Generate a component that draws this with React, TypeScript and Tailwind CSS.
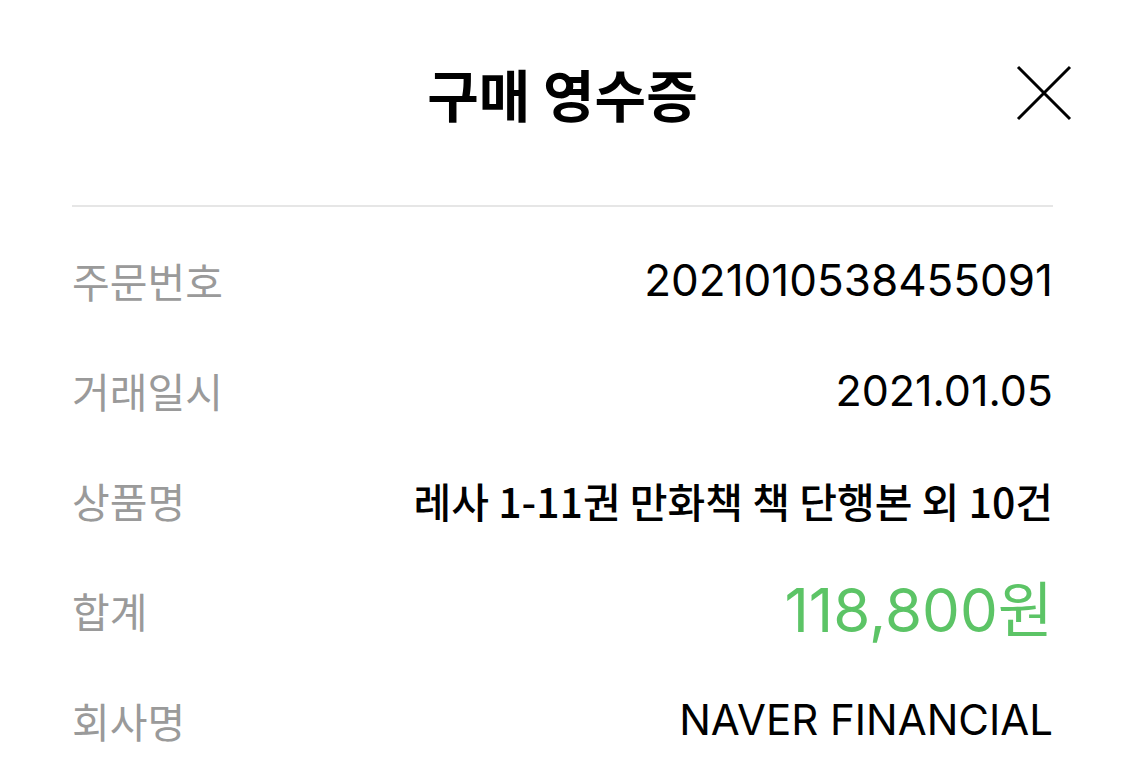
import React from "react";

function Row({ label, children }: { label: string; children: React.ReactNode }) {
  return (
    <div className="flex h-[110px] items-center justify-between">
      <span className="font-['Noto_Sans_CJK_KR',sans-serif] text-[41px] leading-none text-[#9a9a9a]">
        {label}
      </span>
      {children}
    </div>
  );
}

export default function App() {
  return (
    <div className="relative min-h-[784px] w-full bg-white px-[72px]">
      <div className="flex h-[186px] items-center justify-center">
        <h1 className="font-['Noto_Sans_CJK_KR',sans-serif] text-[56px] font-bold leading-none text-black">
          구매 영수증
        </h1>
      </div>
      <button className="absolute right-[53px] top-[65px] h-[56px] w-[56px]" aria-label="close">
        <svg viewBox="0 0 56 56" width="56" height="56">
          <path d="M2 2 L54 54 M54 2 L2 54" stroke="#000" strokeWidth="3" fill="none" />
        </svg>
      </button>
      <div className="mt-[19px] h-[2px] bg-[#e6e6e6]" />
      <div className="pt-[18px]">
        <Row label="주문번호">
          <span className="font-['Inter','Noto_Sans_CJK_KR',sans-serif] text-[44px] leading-none text-black">
            2021010538455091
          </span>
        </Row>
        <Row label="거래일시">
          <span className="font-['Inter','Noto_Sans_CJK_KR',sans-serif] text-[43px] leading-none text-black">
            2021.01.05
          </span>
        </Row>
        <Row label="상품명">
          <span className="font-['Noto_Sans_CJK_KR',sans-serif] text-[41px] font-medium leading-none text-black">
            레사 1-11권 만화책 책 단행본 외 10건
          </span>
        </Row>
        <Row label="합계">
          <span className="font-['Inter','Noto_Sans_CJK_KR',sans-serif] text-[60px] leading-none text-[#5cc466]">
            118,800원
          </span>
        </Row>
        <Row label="회사명">
          <span className="font-['Inter','Noto_Sans_CJK_KR',sans-serif] text-[42px] leading-none text-black">
            NAVER FINANCIAL
          </span>
        </Row>
      </div>
    </div>
  );
}
